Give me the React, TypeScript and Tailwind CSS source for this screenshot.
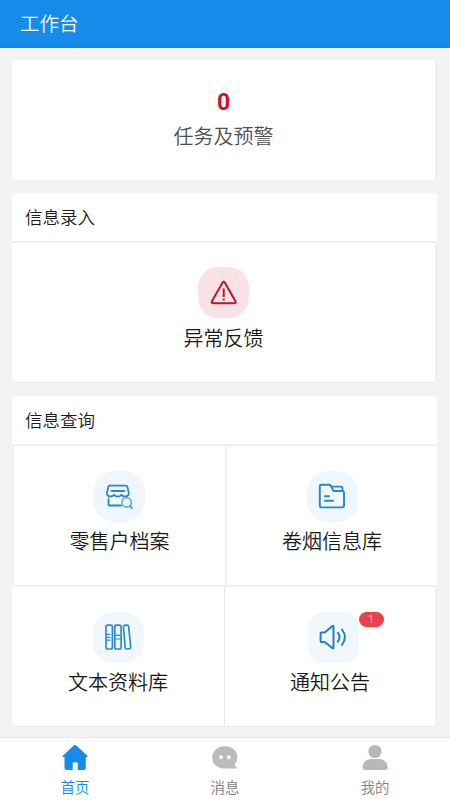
import type { ReactNode } from "react";

function Tile({
  label,
  icon,
  tone,
  className,
  gap = "mt-[4px]",
}: {
  label: string;
  icon: ReactNode;
  tone: string;
  className: string;
  gap?: string;
}) {
  return (
    <div className={`flex flex-col items-center ${className}`}>
      <div className={`flex size-[51px] items-center justify-center ${tone}`}>{icon}</div>
      <div className={`${gap} text-[20px] leading-[30px] text-[#181818]`}>{label}</div>
    </div>
  );
}

const line = {
  fill: "none",
  strokeLinecap: "round" as const,
  strokeLinejoin: "round" as const,
};

function WarningIcon() {
  return (
    <svg width="51" height="51" viewBox="0 0 51 51" {...line} stroke="#b5182f" strokeWidth="2">
      <path d="M24.6 15.6Q25.7 14 26.8 15.6L37.5 34.3Q38.2 36 36.6 36.2H14.8Q13.2 36 13.9 34.3Z" />
      <path d="M25.7 21.5V30M25.7 31.6V33.4" strokeLinecap="butt" />
    </svg>
  );
}

function ShopIcon() {
  return (
    <svg width="51" height="51" viewBox="0 0 51 51" {...line} stroke="#2c86c6" strokeWidth="1.8">
      <path d="M15.5 14.7H31.8Q33 14.7 33.4 15.9L34.7 21.5Q35 25.3 31.4 25.5Q28.8 25.7 27.3 23.7Q25.8 25.7 23.7 25.7Q21.6 25.7 20.1 23.7Q18.7 25.7 16 25.5Q12.8 25.2 13.1 21.5L14.3 15.9Q14.7 14.7 15.5 14.7Z" />
      <path d="M17.5 20H30.5M14.5 28V33.5Q14.5 34.5 15.5 34.5H27" />
      <circle cx="32.7" cy="31.4" r="4.7" stroke="#69a8d3" strokeWidth="1.6" fill="#eef6fd" />
      <path d="M36 35L38 37.2" stroke="#5a91b5" />
    </svg>
  );
}

function FolderIcon() {
  return (
    <svg width="51" height="51" viewBox="0 0 51 51" {...line} stroke="#2988ca" strokeWidth="1.9">
      <path d="M14.2 13.8H22.2Q23.4 13.8 24 15L26.6 20H35Q37 20 37 22V34.6Q37 36.4 35.2 36.4H14.5Q12.8 36.4 12.8 34.6V15.5Q12.8 13.8 14.2 13.8Z" />
      <path d="M24.2 15.6H33.6Q35.5 15.6 35.5 17.5V20M18 25.2H22M18 29.8H26" />
    </svg>
  );
}

function BooksIcon() {
  return (
    <svg width="51" height="51" viewBox="0 0 51 51" {...line} stroke="#2d8ccd" strokeWidth="1.7">
      <rect x="13" y="13.2" width="6.4" height="23.8" rx="1.7" />
      <rect x="21.8" y="13.2" width="6.3" height="23.8" rx="1.7" />
      <path d="M31.5 13.3L34.2 13.1Q35.4 13 35.6 14.3L37.7 35Q37.8 36.5 36.5 36.7L33.6 37Q32.3 37.1 32.2 35.8L30.4 15Q30.3 13.5 31.5 13.3Z" />
      <path d="M14 22.4H17M14 25.3H17M14 28.2H17M22 23.3H28M22 27H28" strokeWidth="1.2" />
    </svg>
  );
}

function SpeakerIcon() {
  return (
    <svg width="51" height="51" viewBox="0 0 51 51" {...line} stroke="#2480c2" strokeWidth="2">
      <path d="M13.3 20.6H16.8L24.3 14Q25.5 13.2 25.5 14.8V35.3Q25.5 37 24.3 36L16.8 30H13.3Q12.6 30 12.6 29.2V21.4Q12.6 20.6 13.3 20.6Z" />
      <path d="M29.8 20.7Q33.3 25.1 29.8 29.6M34 17.5Q39.8 25.1 34 32.8" />
    </svg>
  );
}

function NavItem({ label, color, children }: { label: string; color: string; children: ReactNode }) {
  return (
    <div className={`flex flex-1 flex-col items-center pt-[6px] ${color}`}>
      <svg width="28" height="28" viewBox="0 0 28 28" fill="currentColor">{children}</svg>
      <span className="mt-[4px] text-[14.5px] leading-[22px]">{label}</span>
    </div>
  );
}

export default function App() {
  return (
    <div className="flex h-[800px] w-[450px] flex-col overflow-hidden bg-[#f3f3f3] font-['Noto_Sans_CJK_SC',sans-serif] font-[350]">
      <header className="flex h-12 shrink-0 items-center border-b border-[#1a82d8] bg-[#168bea] pb-px pl-5 text-[19.5px] text-white">
        工作台
      </header>

      <main className="flex flex-1 flex-col pr-[13px] pl-[12px] pt-3">
        <section className="flex h-[120px] flex-col items-center rounded-[4px] border-r-2 border-[#ededed] bg-white pt-[29px]">
          <div className="font-['Roboto',sans-serif] text-[23px] leading-[28px] font-bold text-[#d6101c]">0</div>
          <div className="mt-[4px] text-[20px] leading-[30px] text-[#505050]">任务及预警</div>
        </section>

        <section className="mt-[13px] h-[190px] rounded-[4px] border-b border-[#ebebeb] bg-white">
          <h2 className="flex h-12 items-center pl-[13px] text-[17.5px] text-[#1c1c1c]">信息录入</h2>
          <div className="h-[141px] rounded-b-[4px] border-t-2 border-r-2 border-[#efefef]">
            <Tile label="异常反馈" icon={<WarningIcon />} tone="rounded-[20px] bg-[#fae3e6]" className="pt-[24px]" gap="mt-[5px]" />
          </div>
        </section>

        <section className="mt-[13px] h-[331px] rounded-[4px] border-b border-[#ebebeb] bg-white">
          <h2 className="flex h-12 items-center pl-[13px] text-[17.5px] text-[#1c1c1c]">信息查询</h2>
          <div className="flex h-[141px] border-t-2 border-l-2 border-[#f0f0f0]">
            <Tile label="零售户档案" icon={<ShopIcon />} tone="rounded-[21px] bg-[#f0f6fd]" className="w-[213px] border-r-2 border-[#f1f1f1] pt-[25px]" />
            <Tile label="卷烟信息库" icon={<FolderIcon />} tone="rounded-[21px] bg-[#f0f6fd]" className="flex-1 pt-[25px]" />
          </div>
          <div className="flex h-[141px] rounded-b-[4px] border-t-2 border-r-2 border-[#f0f0f0]">
            <Tile label="文本资料库" icon={<BooksIcon />} tone="rounded-[21px] bg-[#f1f8fd]" className="w-[213px] border-r border-[#e9e9e9] pt-[25px]" />
            <Tile
              label="通知公告"
              icon={
                <>
                  <SpeakerIcon />
                  <span className="absolute top-0 left-[50.5px] flex h-[15px] w-[25px] items-center justify-center rounded-full bg-[#e5444a] font-['Roboto',sans-serif] text-[10px] text-white">
                    1
                  </span>
                </>
              }
              tone="relative ml-[7px] rounded-[15px] bg-[#f1f8fd]"
              className="flex-1 pt-[25px]"
            />
          </div>
        </section>
      </main>

      <nav className="flex h-[63px] shrink-0 border-t border-[#e8e8e8] bg-white">
        <NavItem label="首页" color="text-[#168bea]">
          <path d="M13 1.3Q14 .5 15 1.3L26.6 12Q27 12.9 26 13.1H24.8V24Q24.8 26 23 26H16.7V19.5Q16.7 18.2 15.4 18.2H13Q11.7 18.2 11.7 19.5V26H5.4Q3.5 26 3.5 24V13.1H2.2Q1.1 12.9 1.6 12Z" />
        </NavItem>
        <NavItem label="消息" color="text-[#7c7c7c]">
          <path fill="#bbb" d="M14 2.2C21.2 2.2 26.5 6.9 26.5 13.2Q26.5 17.6 23.3 20.7Q24.2 22.8 26.3 23.7Q26.5 24.6 25.6 24.6H13.7C6.4 24.5 1.2 19.9 1.2 13.4S6.8 2.2 14 2.2Z" />
          <circle cx="10" cy="13.3" r="2" fill="#fff" />
          <circle cx="17.7" cy="13.3" r="2" fill="#fff" />
        </NavItem>
        <NavItem label="我的" color="text-[#828282]">
          <circle cx="14" cy="7.5" r="6.6" fill="#b8b8b8" />
          <path fill="#b8b8b8" d="M10.3 15H17.7C22.8 15 26.5 18.5 26.8 23.5Q26.8 26 24.5 26H3.8Q1.5 26 1.5 23.5C1.8 18.5 5.4 15 10.3 15Z" />
        </NavItem>
      </nav>
    </div>
  );
}
